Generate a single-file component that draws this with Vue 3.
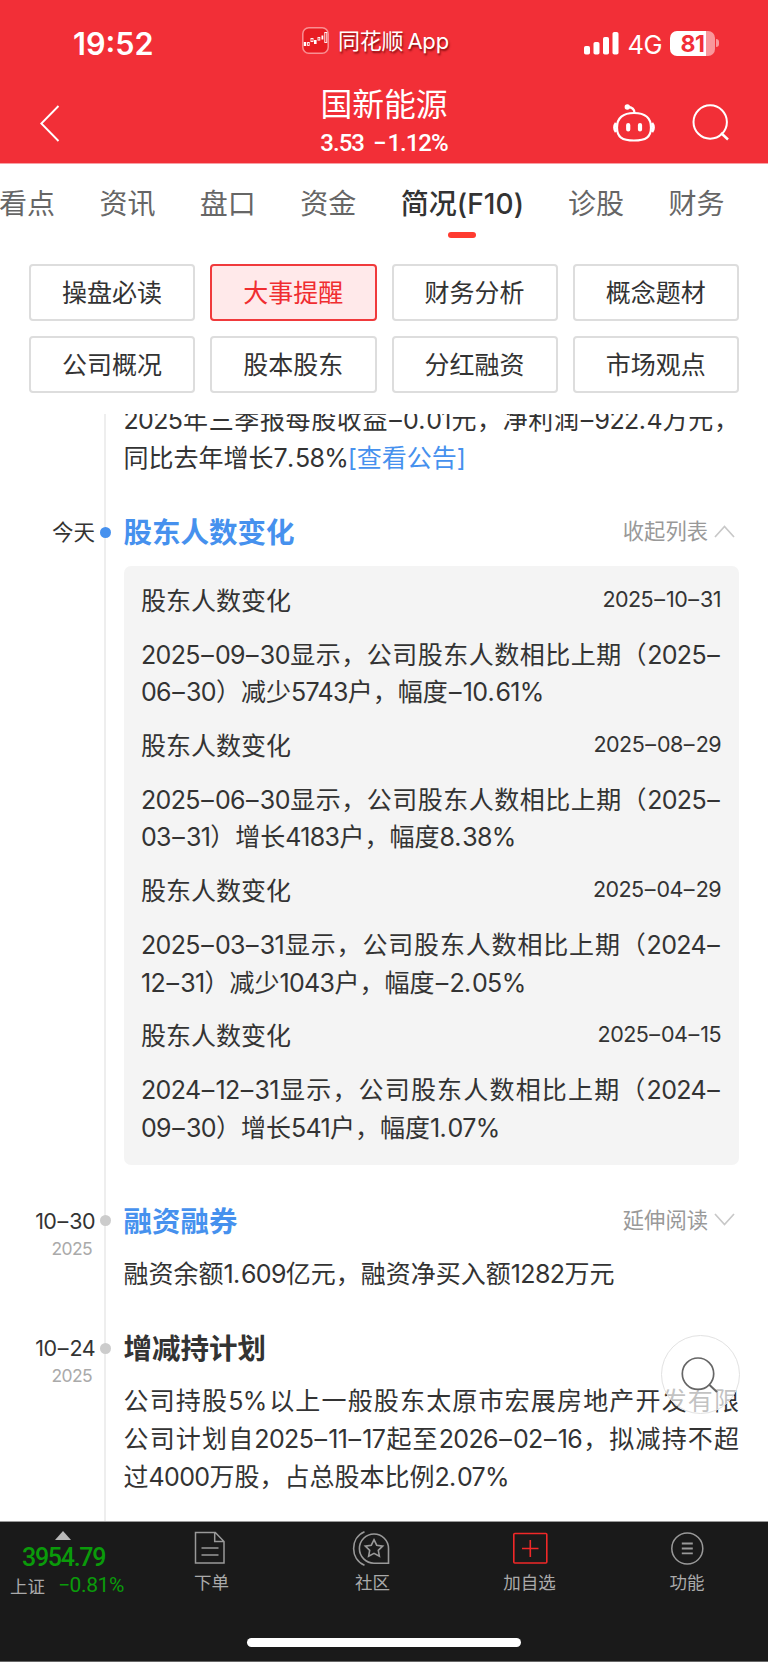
<template>
  <div class="page">
    <header class="header">
      <div class="status-bar">
        <div class="time">19:52</div>
        <div class="app-mark">
          <svg class="app-logo" width="27" height="27" viewBox="0 0 27 27">
            <rect x="0.8" y="0.8" width="25.4" height="25.4" rx="6" fill="#e81c22" stroke="#f98f92" stroke-width="1.5" />
            <path d="M1.800 17h2.400M12 15h2.600M19.500 10.500h1.800" stroke="#fff" stroke-width="3.800" />
            <g fill="none" stroke="#fff" stroke-width="0.9">
              <rect x="5.600" y="15.500" width="1.600" height="3" />
              <rect x="9" y="11.500" width="2" height="3" />
              <rect x="16" y="10.500" width="1.800" height="2.600" />
              <rect x="22.800" y="5.500" width="2" height="10" />
            </g>
          </svg>
          <span>同花顺 App</span>
        </div>
        <div class="signal">
          <svg width="35" height="23" viewBox="0 0 35 23" fill="#fff">
            <rect x="0" y="14" width="6" height="8.5" rx="1.8" />
            <rect x="9.5" y="10" width="6" height="12.5" rx="1.8" />
            <rect x="19" y="5" width="6" height="17.5" rx="1.8" />
            <rect x="28.5" y="0" width="6" height="22.5" rx="1.8" />
          </svg>
          <span class="network">4G</span>
          <span class="battery">81</span>
          <span class="battery-cap"></span>
        </div>
      </div>
      <div class="nav-bar">
        <svg class="back" width="20" height="37" viewBox="0 0 20 37" fill="none" stroke="#fff" stroke-width="1.9">
          <path d="M18.5 1 1.3 18.5 18.5 36" />
        </svg>
        <div class="stock">
          <h1>国新能源</h1>
          <p class="quote">3.53 <span>−</span>1.12%</p>
        </div>
        <div class="nav-actions">
          <svg width="42" height="38" viewBox="0 0 42 38" fill="none" stroke="#fff" stroke-width="2.2">
            <path d="M21 9C32 9 38 14 38 23.5S33 36.5 21 36.5 4 33 4 23.5 10 9 21 9Z" />
            <path d="M3 19c-2 2.500-2 6.500 0 9M39 19c2 2.500 2 6.500 0 9" stroke-width="2.8" />
            <path d="M21.5 9C21.5 5 19 3 14.5 2.8" />
            <circle cx="14.3" cy="3" r="2.7" fill="#fff" stroke="none" />
            <path d="M15.2 21v4.5M27 21v4.5" stroke-width="4.2" stroke-linecap="round" />
          </svg>
          <svg width="37" height="37" viewBox="0 0 37 37" fill="none" stroke="#fff" stroke-width="2">
            <circle cx="18.2" cy="18" r="16.7" />
            <path d="M29 29l7 6.5" stroke-width="2.4" />
          </svg>
        </div>
      </div>
    </header>

    <nav class="tabs">
      <span v-for="tab in tabs" :key="tab" class="tab" :class="{ active: tab === activeTab }">{{ tab }}</span>
    </nav>

    <div class="menu">
      <button v-for="item in menu" :key="item" :class="{ active: item === activeMenu }">{{ item }}</button>
    </div>

    <main class="timeline">
      <section v-for="(entry, i) in entries" :key="i" class="entry">
        <div v-if="entry.title" class="entry-head">
          <div class="when"><span v-for="(part, k) in split(entry.date)" :key="k" :class="part.type">{{ part.text }}</span></div>
          <i class="dot" :class="{ today: entry.today }"></i>
          <h2 :class="{ link: entry.link }">{{ entry.title }}</h2>
          <div v-if="entry.more" class="more">
            {{ entry.more }}
            <svg width="21" height="13" viewBox="0 0 21 13" fill="none" stroke="#c8c8c8" stroke-width="1.7">
              <path :d="entry.open ? 'M1 12 10.5 1.5 20 12' : 'M1 1 10.5 11.5 20 1'" />
            </svg>
          </div>
        </div>
        <div class="entry-body">
          <div class="year">{{ entry.year }}</div>
          <div v-if="entry.list" class="card">
            <article v-for="row in entry.list" :key="row.date">
              <div class="card-head">
                <span>股东人数变化</span>
                <time><span v-for="(part, k) in split(row.date)" :key="k" :class="part.type">{{ part.text }}</span></time>
              </div>
              <p>
                <span v-for="(line, n) in row.lines" :key="n" class="line" :class="{ full: n < row.lines.length - 1 }"><span v-for="(part, k) in split(line)" :key="k" :class="part.type">{{ part.text }}</span></span>
              </p>
            </article>
          </div>
          <p v-else class="text">
            <span v-for="(line, n) in entry.lines" :key="n" class="line" :class="{ full: n < entry.lines.length - 1 }"><span v-for="(part, k) in split(line)" :key="k" :class="part.type">{{ part.text }}</span><a v-if="entry.notice && n === entry.lines.length - 1">[{{ entry.notice }}]</a></span>
          </p>
        </div>
      </section>

      <div class="float-search">
        <svg width="42" height="42" viewBox="0 0 42 42" fill="none" stroke="#666" stroke-width="1.7">
          <circle cx="19" cy="19.7" r="15.7" />
          <path d="M30 30.5l8 7.5" stroke-width="2" />
        </svg>
      </div>
    </main>

    <footer class="footer">
      <div class="index">
        <i class="arrow"></i>
        <div class="index-value">3954.79</div>
        <div class="index-change"><span>上证</span><b><i>−</i>0.81%</b></div>
      </div>
      <div class="tool">
        <svg class="order" width="34" height="36" viewBox="0 0 34 36" fill="none" stroke="#999" stroke-width="1.5">
          <path d="M2.5 2.500h19.800l8.700 9v21.500h-28.500zM21.700 2.500v9h9M8.500 18h17M8.500 25h17" />
        </svg>
        <span>下单</span>
      </div>
      <div class="tool">
        <svg class="community" width="38" height="36" viewBox="0 0 38 36" fill="none" stroke="#999" stroke-width="1.6">
          <path d="M22 4a14.5 14.5 0 0 0 0 29.2h14.500V18.500A14.500 14.500 0 0 0 22 4Z" />
          <path d="M12.500 1.800C-2 8-2 29 12.500 35.200" />
          <path d="M22 9.700l2.700 5.500 6 .9-4.400 4.200 1.100 6-5.400-2.900-5.400 2.900 1.100-6-4.400-4.200 6-.9z" />
        </svg>
        <span>社区</span>
      </div>
      <div class="tool">
        <svg width="36" height="36" viewBox="0 0 36 36" fill="none" stroke="#f02828" stroke-width="1.6">
          <rect x="1.800" y="3.500" width="33" height="29.500" rx="1" />
          <path d="M18.300 10v17M10 18.500h16.500" />
        </svg>
        <span>加自选</span>
      </div>
      <div class="tool">
        <svg width="34" height="36" viewBox="0 0 34 36" fill="none" stroke="#999" stroke-width="1.5">
          <circle cx="17.300" cy="18.500" r="15.500" />
          <path d="M11.800 13.500h11M11.800 18.500h11M11.800 23.300h11" stroke-width="1.8" />
        </svg>
        <span>功能</span>
      </div>
      <div class="home-bar"></div>
    </footer>
  </div>
</template>

<script setup>
import { ref } from "vue";

const tabs = ["看点", "资讯", "盘口", "资金", "简况(F10)", "诊股", "财务"];
const activeTab = ref("简况(F10)");

const menu = [
  "操盘必读",
  "大事提醒",
  "财务分析",
  "概念题材",
  "公司概况",
  "股本股东",
  "分红融资",
  "市场观点",
];
const activeMenu = ref("大事提醒");

const entries = [
  {
    lines: ["2025年三季报每股收益–0.01元，净利润–922.4万元，", "同比去年增长7.58%"],
    notice: "查看公告",
  },
  {
    date: "今天",
    today: true,
    title: "股东人数变化",
    link: true,
    more: "收起列表",
    open: true,
    list: [
      {
        date: "2025–10–31",
        lines: ["2025–09–30显示，公司股东人数相比上期（2025–", "06–30）减少5743户，幅度–10.61%"],
      },
      {
        date: "2025–08–29",
        lines: ["2025–06–30显示，公司股东人数相比上期（2025–", "03–31）增长4183户，幅度8.38%"],
      },
      {
        date: "2025–04–29",
        lines: ["2025–03–31显示，公司股东人数相比上期（2024–", "12–31）减少1043户，幅度–2.05%"],
      },
      {
        date: "2025–04–15",
        lines: ["2024–12–31显示，公司股东人数相比上期（2024–", "09–30）增长541户，幅度1.07%"],
      },
    ],
  },
  {
    date: "10–30",
    year: "2025",
    title: "融资融券",
    link: true,
    more: "延伸阅读",
    lines: ["融资余额1.609亿元，融资净买入额1282万元"],
  },
  {
    date: "10–24",
    year: "2025",
    title: "增减持计划",
    lines: [
      "公司持股5%以上一般股东太原市宏展房地产开发有限",
      "公司计划自2025–11–17起至2026–02–16，拟减持不超",
      "过4000万股，占总股本比例2.07%",
    ],
  },
];

// digits, dashes and marks are spaced differently from the Chinese text
const split = (line) =>
  line
    .split(/([0-9]+|–|[.%])/)
    .filter(Boolean)
    .map((text) => {
      let type = "";
      if (/^[0-9]/.test(text)) type = "num";
      else if (text === "–") type = "dash";
      else if (/^[.%]/.test(text)) type = "mark";
      return { text, type };
    });
</script>

<style>
body {
  margin: 0;
  background: #fff;
}
</style>

<style scoped>
.page {
  display: flex;
  flex-direction: column;
  width: 768px;
  height: 1662px;
  overflow: hidden;
  background: #fff;
  color: #333;
  font-family: Inter, "Noto Sans CJK SC", sans-serif;
}
h1,
h2,
p {
  margin: 0;
}
svg {
  display: block;
  flex: none;
}

/* header */
.header {
  flex: none;
  box-sizing: border-box;
  height: 164px;
  background: #f22f37;
  border-bottom: 1px solid #f8a0a4;
  color: #fff;
}
.status-bar {
  display: grid;
  grid-template-columns: 302px 1fr auto;
  height: 86px;
  padding-right: 49px;
}
.time {
  padding: 26px 0 0 73px;
  font-size: 30.6px;
  font-weight: 600;
  line-height: 36px;
}
.app-mark {
  display: flex;
  align-items: center;
  gap: 9px;
  height: 81px;
  font-size: 22px;
  line-height: 26px;
  letter-spacing: -0.2px;
  word-spacing: -2px;
  white-space: nowrap;
  text-shadow: 1px 2px 2px rgba(90, 0, 0, 0.7);
}
.signal {
  display: flex;
  align-items: center;
  height: 86px;
}
.network {
  margin: 2px 8px 0 9px;
  font-size: 25.5px;
  letter-spacing: -0.5px;
}
.battery {
  width: 45px;
  height: 25px;
  border-radius: 7px;
  background: linear-gradient(to right, #fff 36px, #f9979b 36px);
  color: #f22f37;
  font-size: 23px;
  font-weight: 700;
  line-height: 26px;
  text-align: center;
  letter-spacing: -0.5px;
}
.battery-cap {
  width: 3px;
  height: 8px;
  margin-left: 1px;
  border-radius: 0 4px 4px 0;
  background: #f9979b;
}
.nav-bar {
  display: grid;
  grid-template-columns: 1fr 200px 1fr;
  height: 77px;
}
.back {
  margin: 19px 0 0 40px;
}
.stock {
  text-align: center;
}
h1 {
  font-size: 31.8px;
  font-weight: 400;
  line-height: 38px;
}
.quote {
  font-family: Roboto, sans-serif;
  font-size: 24px;
  font-weight: 500;
  line-height: 38px;
  letter-spacing: -1px;
  word-spacing: 4px;
}
.quote span {
  margin-right: 2px;
}
.nav-actions {
  display: flex;
  align-items: flex-start;
  justify-content: flex-end;
  gap: 37px;
  padding: 18px 39px 0 0;
}

/* tabs */
.tabs {
  display: flex;
  flex: none;
  gap: 44.4px;
  height: 100px;
  margin-left: -1px;
  white-space: nowrap;
}
.tab {
  flex: none;
  height: 73px;
  color: #666;
  font-size: 28px;
  line-height: 80px;
}
.tab.active {
  width: 123px;
  color: #333;
  font-weight: 500;
  letter-spacing: 0.1px;
}
.tab.active::after {
  content: "";
  display: block;
  width: 28px;
  height: 6px;
  margin: -12px auto 0;
  border-radius: 3px;
  background: #ff3b30;
}

/* menu buttons */
.menu {
  display: grid;
  flex: none;
  grid-template-columns: repeat(4, 1fr);
  gap: 15px;
  height: 129px;
  margin: 0 29px 21px;
}
.menu button {
  padding: 0;
  border: 2px solid #ddd;
  border-radius: 4px;
  background: #fff;
  color: #333;
  font-family: inherit;
  font-size: 25px;
  line-height: 50px;
}
.menu button.active {
  border-color: #f03a3c;
  background: #ffe9ea;
  color: #f02d30;
}

/* timeline */
.timeline {
  position: relative;
  flex: 1;
  min-height: 0;
  overflow: hidden;
  background: linear-gradient(#eee, #eee) 104px 0 / 2px 100% no-repeat;
}
.entry {
  margin-bottom: 36.2px;
}
.entry:first-child {
  margin-top: -13.4px;
}
.entry-head,
.entry-body {
  display: grid;
  grid-template-columns: 95px 5px 11px 12.5px 1fr auto;
  align-items: center;
  padding-right: 29px;
}
.entry-head {
  height: 40px;
  margin-bottom: 13.6px;
}
.when {
  font-size: 21.5px;
  line-height: 38px;
  text-align: right;
  white-space: nowrap;
}
.dot {
  grid-column: 3;
  width: 11px;
  height: 11px;
  border-radius: 50%;
  background: #ccc;
}
.dot.today {
  background: #4691ee;
}
h2 {
  grid-column: 5;
  padding-top: 2px;
  font-size: 28.5px;
  font-weight: 700;
  line-height: 38px;
}
h2.link,
a {
  color: #4691ee;
}
.more {
  display: flex;
  align-items: center;
  gap: 6px;
  padding: 0 4px 2px 0;
  color: #999;
  font-size: 21.3px;
  line-height: 38px;
}
.entry-body {
  align-items: start;
}
.year {
  grid-column: 1;
  height: 0;
  margin-top: -15.5px;
  padding-right: 3px;
  color: #aaa;
  font-size: 17.5px;
  line-height: 20px;
  letter-spacing: -0.6px;
  text-align: right;
}
.text,
.card {
  grid-column: 5 / 7;
  font-size: 25px;
  line-height: 37.7px;
}
.line {
  position: relative;
  top: 1.5px;
  display: block;
  white-space: nowrap;
}
.line.full {
  text-align-last: justify;
}
.line a {
  margin-left: -2px;
}
.num {
  letter-spacing: -0.026em;
}
.mark {
  letter-spacing: 0.03em;
}
.dash {
  margin: 0 0.05em;
}
.card {
  padding: 15px 18px 18.5px 17.5px;
  border-radius: 7px;
  background: #f4f4f4;
}
article + article {
  margin-top: 15.6px;
}
.card-head {
  display: flex;
  justify-content: space-between;
  padding-top: 2px;
  margin-bottom: 14.5px;
}
time {
  margin-top: -2px;
  font-size: 21.5px;
}
.float-search {
  position: absolute;
  top: 921px;
  right: 28.5px;
  display: flex;
  align-items: center;
  justify-content: center;
  box-sizing: border-box;
  width: 79px;
  height: 79px;
  border: 1px solid #e2e2e2;
  border-radius: 50%;
  background: rgba(255, 255, 255, 0.7);
}

/* bottom bar */
.footer {
  display: grid;
  flex: none;
  grid-template-columns: 131px 161px 161px 153px 162px;
  grid-template-rows: 116px 1fr;
  box-sizing: border-box;
  height: 141px;
  border-top: 1px solid #999;
  border-bottom: 1px solid #666;
  background: #1a1a1a;
  color: #aaa;
}
.index {
  padding-top: 9px;
  font-family: Roboto, "Noto Sans CJK SC", sans-serif;
}
.arrow {
  display: block;
  width: 0;
  margin-left: 55px;
  border: 8px solid transparent;
  border-top: 0;
  border-bottom: 9px solid #b8b8b8;
}
.index-value {
  padding-left: 22px;
  color: #0a9b0a;
  font-size: 25px;
  font-weight: 500;
  line-height: 35px;
  letter-spacing: -1.3px;
}
.index-change {
  display: flex;
  align-items: center;
  gap: 13px;
  height: 20px;
  padding-left: 10px;
  font-size: 17.5px;
}
.index-change b {
  color: #0a9b0a;
  font-size: 21px;
  font-weight: 400;
  letter-spacing: -0.4px;
}
.index-change i {
  font-style: normal;
}
.tool {
  display: flex;
  flex-direction: column;
  align-items: center;
  padding-top: 8px;
  font-size: 17.5px;
  line-height: 26px;
}
.tool span {
  margin-top: 4px;
}
.order {
  margin-right: 4px;
}
.community {
  margin-right: 3px;
}
.home-bar {
  grid-column: 1 / -1;
  justify-self: center;
  width: 274px;
  height: 9px;
  border-radius: 5px;
  background: #fff;
}
</style>
